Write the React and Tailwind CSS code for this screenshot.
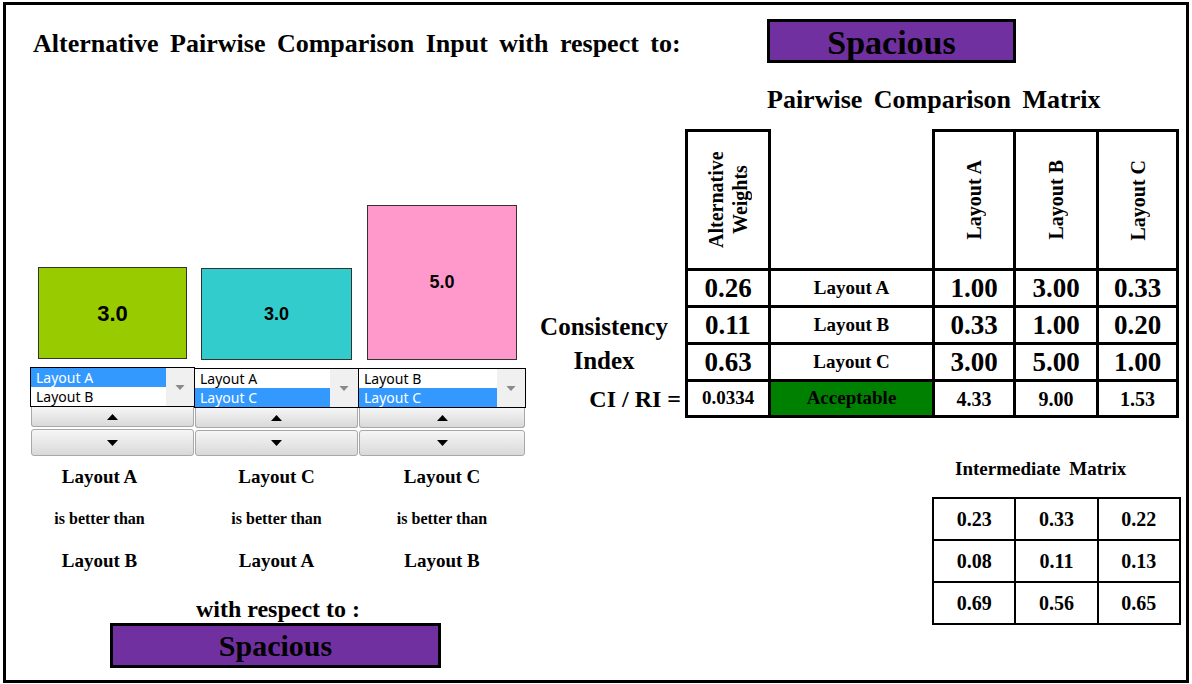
import React from 'react'

function Tri({ up, className }) {
  return (
    <svg width="11" height="6" viewBox="0 0 11 6" className={className}>
      <path d={up ? 'M0 6 L5.5 0 L11 6 Z' : 'M0 0 L11 0 L5.5 6 Z'} fill="currentColor" />
    </svg>
  )
}

function ListBox({ items, selected }) {
  return (
    <div className="flex h-[40px] w-full border border-black bg-white font-['Noto_Sans',sans-serif] text-[14px] font-normal">
      <div className="flex flex-1 flex-col">
        {items.map((it, i) => (
          <div
            key={it}
            className={
              i === selected
                ? 'flex h-[19px] items-center bg-[#3399FF] pl-[5px] text-white'
                : 'flex h-[19px] items-center pl-[5px] text-black'
            }
          >
            {it}
          </div>
        ))}
      </div>
      <div className="flex w-[28px] items-center justify-center bg-[#F0F0F0] text-[#8a8a8a]">
        <Tri className="h-[5px] w-[10px]" />
      </div>
    </div>
  )
}

function Pair({ value, boxClass, items, selected, better, worse, labelPad, colClass, downClass }) {
  return (
    <div className={`flex flex-col items-center ${colClass}`}>
      <div className={`flex items-center justify-center border border-[#333] font-['Liberation_Sans',sans-serif] ${boxClass}`}>
        {value}
      </div>
      <div className="mt-[8px] w-full">
        <ListBox items={items} selected={selected} />
      </div>
      <div className="flex h-[20px] w-[calc(100%-2px)] items-center justify-center rounded-b-[3px] border border-t-0 border-[#a8a8a8] bg-gradient-to-b from-[#f6f6f6] to-[#d9d9d9] text-black">
        <Tri up />
      </div>
      <div className={`mt-[2px] flex w-[calc(100%-2px)] items-center justify-center rounded-[3px] border border-[#a8a8a8] bg-gradient-to-b from-[#f6f6f6] to-[#d9d9d9] text-black ${downClass}`}>
        <Tri />
      </div>
      <div className={`flex w-full flex-col items-center ${labelPad}`}>
        <div className="flex h-[42px] items-center text-[19px]">{better}</div>
        <div className="flex h-[42px] items-center text-[16px]">is better than</div>
        <div className="flex h-[42px] items-center text-[19px]">{worse}</div>
      </div>
    </div>
  )
}

const cell = 'flex items-center justify-center border-l-[3px] border-t-[3px] border-black'

export default function App() {
  const rows = [
    ['', '0.26', 'Layout A', ['1.00', '3.00', '0.33']],
    ['Consistency', '0.11', 'Layout B', ['0.33', '1.00', '0.20']],
    ['Index', '0.63', 'Layout C', ['3.00', '5.00', '1.00']],
  ]
  const inter = [
    ['0.23', '0.33', '0.22'],
    ['0.08', '0.11', '0.13'],
    ['0.69', '0.56', '0.65'],
  ]

  return (
    <div className="h-[684px] w-[1192px] bg-white px-[3px] pt-[2px] pb-px font-['Liberation_Serif',serif] font-bold text-black">
      <div className="flex h-full flex-col border-[3px] border-black">
        {/* header */}
        <div className="flex items-start pt-[14px]">
          <div className="ml-[27px] mt-[10px] w-[734px] text-[26px] leading-[30px] [word-spacing:5px]">
            Alternative Pairwise Comparison Input with respect to:
          </div>
          <div className="flex h-[44px] w-[249px] items-center justify-center border-[3px] border-black bg-[#7030A0] pt-[4px] text-[34px] leading-none">
            Spacious
          </div>
        </div>

        <div className="flex flex-1">
          {/* left: pairwise inputs */}
          <div className="flex w-[529px] flex-col pl-[24px] pt-[142px]">
            <div className="flex items-end">
              <Pair
                value="3.0"
                boxClass="h-[92px] w-[149px] bg-[#99CC00] text-[22px]"
                items={['Layout A', 'Layout B']}
                selected={0}
                better="Layout A"
                worse="Layout B"
                labelPad="pr-[26px]"
                colClass="w-[165px]"
                downClass="h-[27px]"
              />
              <Pair
                value="3.0"
                boxClass="h-[92px] w-[151px] bg-[#33CCCC] text-[18px]"
                items={['Layout A', 'Layout C']}
                selected={1}
                better="Layout C"
                worse="Layout A"
                labelPad=""
                colClass="-ml-px w-[165px]"
                downClass="h-[26px]"
              />
              <Pair
                value="5.0"
                boxClass="h-[155px] w-[150px] bg-[#FF99CC] text-[18px]"
                items={['Layout B', 'Layout C']}
                selected={1}
                better="Layout C"
                worse="Layout B"
                labelPad=""
                colClass="-ml-px w-[168px]"
                downClass="h-[26px]"
              />
            </div>
            <div className="mt-[14px] w-[496px] text-center text-[24px] leading-[27px]">with respect to :</div>
            <div className="ml-[80px] flex h-[45px] w-[331px] items-center justify-center border-[3px] border-black bg-[#7030A0] text-[30px] leading-none">
              Spacious
            </div>
          </div>

          {/* right: matrices */}
          <div className="flex flex-1 flex-col">
            <div className="ml-[232px] mt-[22px] text-[26px] leading-[30px] [word-spacing:5px]">
              Pairwise Comparison Matrix
            </div>
            <div className="mt-[14px] grid grid-cols-[150px_83px_164px_81px_83px_83px] grid-rows-[139px_37px_37px_37px_39px]">
              <div />
              <div className={cell}>
                <div className="rotate-180 text-center text-[20px] leading-[24px] [writing-mode:vertical-rl]">
                  Alternative Weights
                </div>
              </div>
              <div className="border-l-[3px] border-black" />
              {['Layout A', 'Layout B', 'Layout C'].map((h, i) => (
                <div key={h} className={i === 2 ? `${cell} border-r-[3px]` : cell}>
                  <div className="rotate-180 text-[20px] [writing-mode:vertical-rl]">{h}</div>
                </div>
              ))}

              {rows.map(([lab, w, name, vals]) => (
                <React.Fragment key={name}>
                  <div
                    className={
                      lab === 'Consistency'
                        ? 'flex items-center justify-center pr-[12px] pt-[6px] text-[25px]'
                        : 'flex items-center justify-center pr-[12px] text-[25px]'
                    }
                  >
                    {lab}
                  </div>
                  <div className={`${cell} text-[27px]`}>{w}</div>
                  <div className={`${cell} text-[19px]`}>{name}</div>
                  {vals.map((v, i) => (
                    <div key={i} className={i === 2 ? `${cell} border-r-[3px] text-[27px]` : `${cell} text-[27px]`}>
                      {v}
                    </div>
                  ))}
                </React.Fragment>
              ))}

              <div className="flex items-center justify-end pr-[4px] text-[24px]">CI / RI =</div>
              <div className={`${cell} border-b-[3px] text-[19px]`}>0.0334</div>
              <div className={`${cell} border-b-[3px] bg-[#008000] text-[19px]`}>Acceptable</div>
              <div className={`${cell} border-b-[3px] text-[20px]`}>4.33</div>
              <div className={`${cell} border-b-[3px] text-[20px]`}>9.00</div>
              <div className={`${cell} border-b-[3px] border-r-[3px] text-[20px]`}>1.53</div>
            </div>

            <div className="ml-[420px] mt-[39px] text-[19px] leading-[24px] [word-spacing:4px]">Intermediate Matrix</div>
            <div className="ml-[397px] mt-[16px] grid w-[249px] grid-cols-3 border-b-2 border-r-2 border-black">
              {inter.flat().map((v, i) => (
                <div key={i} className="flex h-[42px] items-center justify-center border-l-2 border-t-2 border-black text-[20px]">
                  {v}
                </div>
              ))}
            </div>
          </div>
        </div>
      </div>
    </div>
  )
}
